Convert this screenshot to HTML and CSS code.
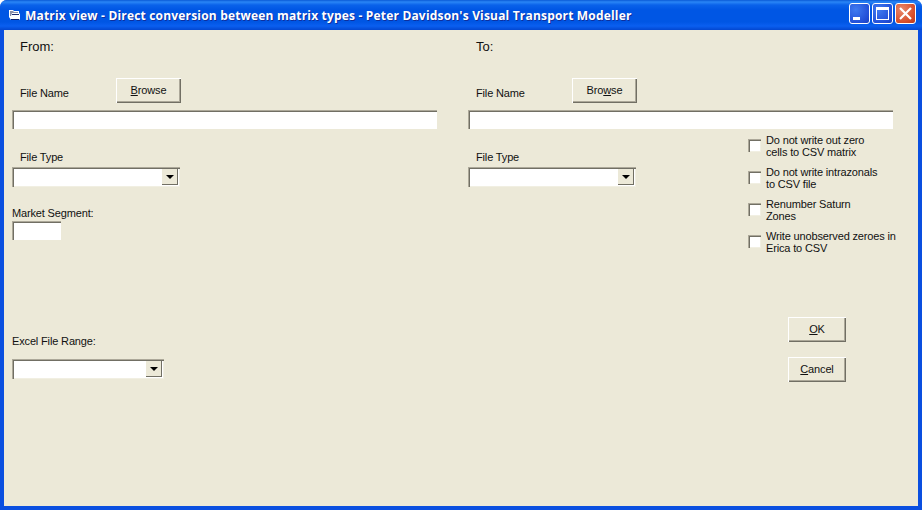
FILE: index.html
```html
<!DOCTYPE html>
<html lang="en">
<head>
<meta charset="utf-8">
<title>Matrix view</title>
<link rel="stylesheet" href="styles.css">
</head>
<body>
<div class="window">
  <header class="titlebar">
    <svg class="app-icon" width="13" height="12" viewBox="0 0 13 12"><path d="M1 1h4l1 1h5v2l1 1v5l-1 1H3L1 8z" fill="#fff"/><path d="M2 2h3l1 1h4v1H4L3 7H2z" fill="#8a8fa8"/><path d="M4 5h7v1H4z" fill="#1a2a70"/><path d="M3 10h8v1H3z" fill="#0a1f70"/></svg>
    <div class="title">Matrix view - Direct conversion between matrix types - Peter Davidson's Visual Transport Modeller</div>
    <div class="caption-buttons">
      <div class="cap cap-blue"><svg width="19" height="19" viewBox="0 0 19 19"><rect x="3" y="13" width="7" height="3" fill="#fff"/></svg></div>
      <div class="cap cap-blue"><svg width="19" height="19" viewBox="0 0 19 19"><rect x="3.5" y="3.5" width="12" height="12" fill="none" stroke="#fff"/><rect x="3" y="3" width="13" height="3" fill="#fff"/></svg></div>
      <div class="cap cap-red"><svg width="19" height="19" viewBox="0 0 19 19"><path d="M4 4l11 11M15 4L4 15" stroke="#fff" stroke-width="2.2" fill="none"/></svg></div>
    </div>
  </header>
  <main class="client">
    <section class="panel">
      <div class="heading">From:</div>
      <div class="file-row">
        <span class="label indent">File Name</span>
        <button class="btn browse"><u>B</u>rowse</button>
      </div>
      <div class="field wide"></div>
      <div class="label indent type-label">File Type</div>
      <div class="combo type-combo"><span class="arrow"></span></div>
      <div class="label segment-label">Market Segment:</div>
      <div class="field segment"></div>
      <div class="label range-label">Excel File Range:</div>
      <div class="combo range-combo"><span class="arrow"></span></div>
    </section>
    <section class="panel">
      <div class="heading">To:</div>
      <div class="file-row">
        <span class="label indent">File Name</span>
        <button class="btn browse">Bro<u>w</u>se</button>
      </div>
      <div class="field wide"></div>
      <div class="lower">
        <div class="lower-main">
          <div class="label indent type-label">File Type</div>
          <div class="combo type-combo"><span class="arrow"></span></div>
        </div>
        <div class="lower-side">
          <div class="check"><span class="box"></span><span class="check-text">Do not write out zero<br>cells to CSV matrix</span></div>
          <div class="check"><span class="box"></span><span class="check-text">Do not write intrazonals<br>to CSV file</span></div>
          <div class="check"><span class="box"></span><span class="check-text">Renumber Saturn<br>Zones</span></div>
          <div class="check"><span class="box"></span><span class="check-text">Write unobserved zeroes in<br>Erica to CSV</span></div>
          <div class="actions">
            <button class="btn action"><u>O</u>K</button>
            <button class="btn action"><u>C</u>ancel</button>
          </div>
        </div>
      </div>
    </section>
  </main>
</div>
</body>
</html>
```
FILE: styles.css
```css
* { box-sizing: border-box; }
html, body { margin: 0; padding: 0; }
body { width: 922px; height: 510px; overflow: hidden; font-family: "Liberation Sans", Arial, sans-serif; font-size: 12px; color: #111; }
.window { width: 922px; height: 510px; display: flex; flex-direction: column; background: #0a4fe0; border-radius: 7px 7px 0 0; overflow: hidden; }
.titlebar { height: 30px; flex: none; display: flex; align-items: center; padding: 0 6px 0 8px; background: linear-gradient(#0a5ad6 0, #2a86f6 2px, #0a62ea 5px, #0056e4 10px, #0056e4 22px, #0a5ff0 26px, #0347d0 30px); }
.app-icon { flex: none; margin-top: -1px; }
.title { margin-left: 4px; flex: 1; color: #fff; font-family: "Open Sans", sans-serif; font-weight: 700; font-size: 12px; white-space: nowrap; text-shadow: 1px 1px 0 #0f2f9c; letter-spacing: 0.18px; padding-top: 1px; }
.caption-buttons { display: flex; gap: 2px; margin-top: -3px; }
.cap { width: 21px; height: 21px; border: 1px solid #fff; border-radius: 3px; display: flex; align-items: center; justify-content: center; }
.cap-blue { background: radial-gradient(circle at 30% 30%, #3f7af0, #2350d8 70%, #1a3fc0); }
.cap-red { background: radial-gradient(circle at 30% 30%, #e8896c, #d8502c 65%, #b8381a); }
.client { flex: 1; display: grid; grid-template-columns: 456px 454px; margin: 0 4px 4px; background: #ece9d8; }
.panel { padding-left: 8px; display: flex; flex-direction: column; align-items: flex-start; }
.heading { font-size: 13px; line-height: 16px; margin: 9px 0 0 8px; }
.label { line-height: 14px; font-size: 11px; letter-spacing: -0.15px; white-space: nowrap; }
.indent { margin-left: 8px; }
.file-row { display: flex; align-items: flex-end; height: 25px; margin-top: 23px; }
.file-row .label { width: 96px; margin-bottom: 3px; }
.btn { font-family: inherit; font-size: 11px; letter-spacing: -0.15px; color: #111; padding: 0 0 2px; background: #ece9d8; border: 0; border-radius: 0; box-shadow: inset 1px 1px 0 #fff, inset -1px -1px 0 #716f64, inset -2px -2px 0 #aca899; }
.browse { width: 65px; height: 25px; }
.field { background: #fff; box-shadow: inset 1px 1px 0 #aca899, inset 2px 2px 0 #716f64; }
.wide { width: 425px; height: 19px; margin-top: 7px; }
.type-label { margin-top: 21px; }
.combo { height: 20px; background: #fff; position: relative; box-shadow: inset 1px 1px 0 #aca899, inset 2px 2px 0 #716f64, inset -1px -1px 0 #f1efe2; }
.type-combo { width: 168px; margin-top: 3px; }
.range-combo { width: 152px; margin-top: 11px; }
.arrow { position: absolute; right: 2px; top: 2px; width: 16px; height: 16px; background: #ece9d8; box-shadow: inset -1px -1px 0 #716f64; display: flex; align-items: center; justify-content: center; }
.arrow::after { content: ""; border-style: solid; border-width: 4px 4px 0; border-color: #000 transparent transparent; }
.segment-label { margin-top: 19px; }
.segment { width: 49px; height: 19px; margin-top: 1px; }
.range-label { margin-top: 94px; }
.lower { display: flex; align-items: flex-start; width: 100%; }
.lower-main { width: 280px; flex: none; }
.lower-side { display: flex; flex-direction: column; gap: 4px; margin-top: 3px; }
.check { display: flex; align-items: center; height: 28px; white-space: nowrap; }
.box { width: 13px; height: 13px; flex: none; margin-top: -2px; background: #fff; box-shadow: inset 1px 1px 0 #aca899, inset 2px 2px 0 #716f64, inset -1px -1px 0 #f1efe2; margin-right: 5px; }
.check-text { font-size: 11px; letter-spacing: -0.15px; line-height: 12px; }
.actions { display: flex; flex-direction: column; gap: 15px; margin: 57px 0 0 40px; }
.action { width: 58px; height: 25px; }
```
